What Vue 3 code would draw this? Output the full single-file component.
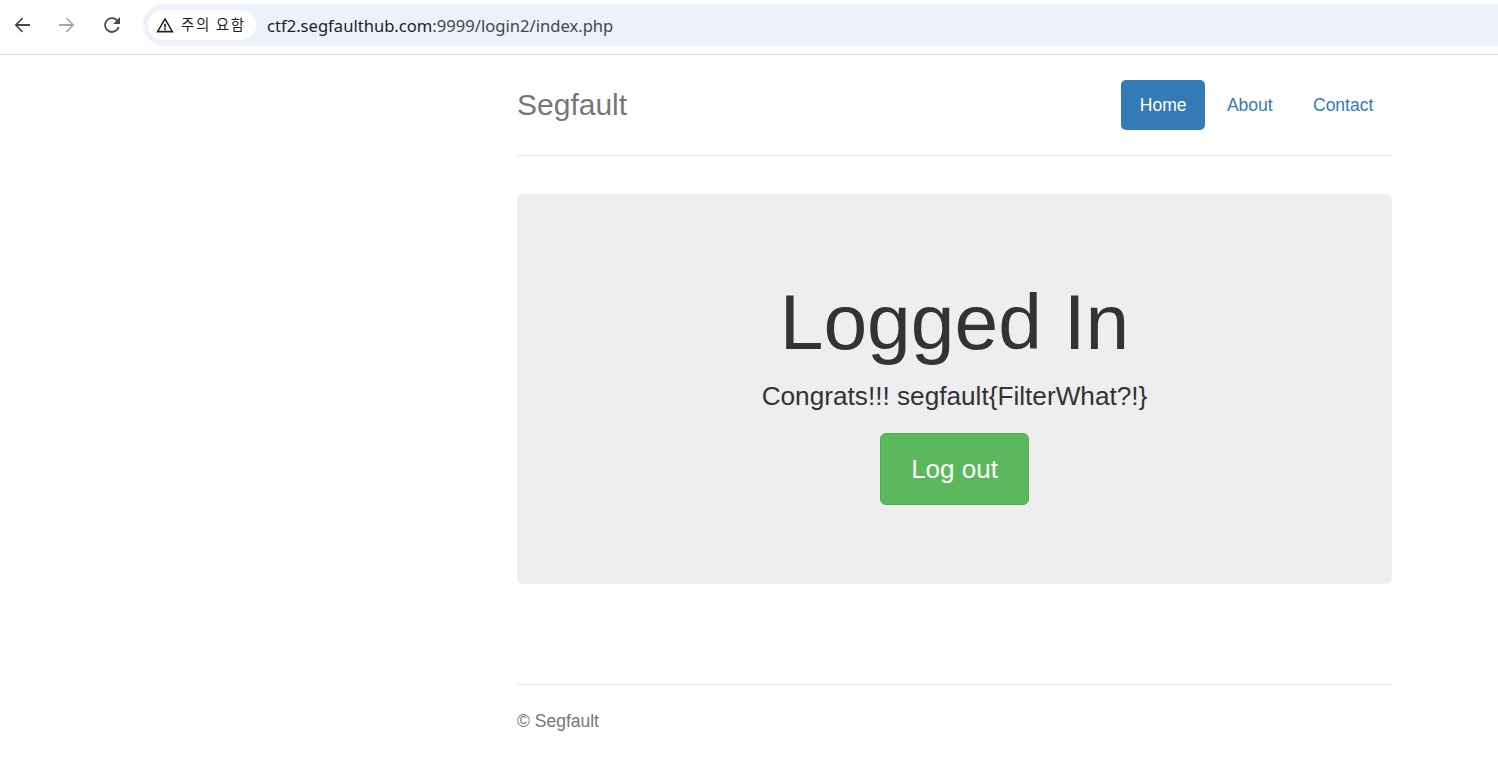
<template>
  <div class="browser-bar">
    <button class="nav-icon">
      <svg width="24" height="24" viewBox="0 0 24 24"><path d="M20 12.900H7.800l5.300 5.300L12 19.400 4.600 12 12 4.600l1.100 1.200-5.300 5.300H20z" fill="#474747" /></svg>
    </button>
    <button class="nav-icon">
      <svg width="24" height="24" viewBox="0 0 24 24"><path d="M4 11.100h12.200l-5.300-5.300L12 4.600l7.400 7.400-7.400 7.400-1.100-1.200 5.300-5.300H4z" fill="#a6a6a6" /></svg>
    </button>
    <button class="nav-icon">
      <svg width="24" height="24" viewBox="0 0 24 24"><path d="M17.500 6.500A7.800 7.800 0 1 0 19.600 14h-2A6 6 0 1 1 12 6c1.700 0 3.100.7 4.200 1.800L13.200 11H20V4z" fill="#474747" /></svg>
    </button>
    <div class="omnibox">
      <div class="warn-chip">
        <svg width="20" height="20" viewBox="0 0 24 24"><path d="M12 3 1.500 21h21zm0 3.600L19.300 19H4.700zM11 10.500v4.500h2v-4.500zm0 5.500v2h2v-2z" fill="#1f1f1f" fill-rule="evenodd" /></svg>
        <span class="warn-text">주의 요함</span>
      </div>
      <div class="url"><span class="host">ctf2.segfaulthub.com</span>:9999/login2/index.php</div>
    </div>
  </div>

  <div class="container">
    <div class="header">
      <h3 class="brand">Segfault</h3>
      <ul class="nav">
        <li><a class="active">Home</a></li>
        <li><a>About</a></li>
        <li><a>Contact</a></li>
      </ul>
    </div>

    <div class="jumbotron">
      <h1>Logged In</h1>
      <p class="lead">{{ message }}</p>
      <a class="btn">Log out</a>
    </div>

    <div class="footer">
      <p>© Segfault</p>
    </div>
  </div>
</template>

<script setup>
const message = 'Congrats!!! segfault{FilterWhat?!}'
</script>

<style>
html,
body {
  margin: 0;
  background: #fff;
}
</style>

<style scoped>
.browser-bar {
  height: 54px;
  border-bottom: 1px solid #dedede;
  display: flex;
  align-items: center;
  padding-left: 10px;
}

.nav-icon {
  width: 24px;
  height: 24px;
  padding: 0;
  border: none;
  background: none;
  margin-right: 21px;
  margin-top: -4px;
  display: flex;
}

.omnibox {
  flex: 1;
  height: 42px;
  margin-left: -2px;
  margin-top: -4px;
  background: #ecf1fa;
  border-radius: 21px 0 0 21px;
  display: flex;
  align-items: center;
  padding-left: 5px;
}

.warn-chip {
  height: 30px;
  width: 108px;
  background: #fff;
  border-radius: 15px;
  display: flex;
  align-items: center;
  gap: 6px;
  padding-left: 7px;
  box-sizing: border-box;
  font-family: "Noto Sans CJK KR", sans-serif;
  font-size: 14.5px;
  letter-spacing: 1.6px;
  color: #1f1f1f;
}

.warn-text {
  margin-top: -3px;
}

.url {
  margin-left: 11px;
  font-family: "Noto Sans", "Liberation Sans", sans-serif;
  font-size: 16.6px;
  color: #474747;
}

.host {
  color: #1f1f1f;
}

.container {
  width: 875px;
  margin-left: 517px;
  font-family: "Liberation Sans", Arial, sans-serif;
  font-size: 14px;
  line-height: 20px;
  color: #333;
}

.header {
  display: flex;
  justify-content: space-between;
  padding: 25px 0;
  height: 50px;
  border-bottom: 1px solid #e5e5e5;
}

.brand {
  margin: 0;
  font-size: 30px;
  font-weight: normal;
  line-height: 50px;
  color: #777;
}

.nav {
  list-style: none;
  display: flex;
  gap: 3px;
  margin: 0;
  padding: 0;
}

.nav a {
  display: block;
  padding: 15px 18.7px;
  font-size: 17.5px;
  line-height: 20px;
  color: #337ab7;
  border-radius: 5px;
}

.nav a.active {
  color: #fff;
  background: #337ab7;
}

.jumbotron {
  margin-top: 38px;
  height: 390px;
  background: #eee;
  border-radius: 6px;
  text-align: center;
  box-sizing: border-box;
  padding-top: 84px;
}

.jumbotron h1 {
  margin: 0;
  font-size: 78.6px;
  font-weight: normal;
  line-height: 88px;
}

.lead {
  margin: 10px 0 0;
  font-size: 26.2px;
  line-height: 40px;
}

.btn {
  display: inline-block;
  margin-top: 17px;
  padding: 18px 30.6px;
  font-size: 26px;
  line-height: 34px;
  color: #fff;
  background: #5cb85c;
  border: 1px solid #4cae4c;
  border-radius: 6px;
}

.footer {
  margin-top: 100px;
  border-top: 1px solid #e5e5e5;
  padding-top: 26px;
  color: #777;
  font-size: 17.5px;
}

.footer p {
  margin: 0;
}
</style>
